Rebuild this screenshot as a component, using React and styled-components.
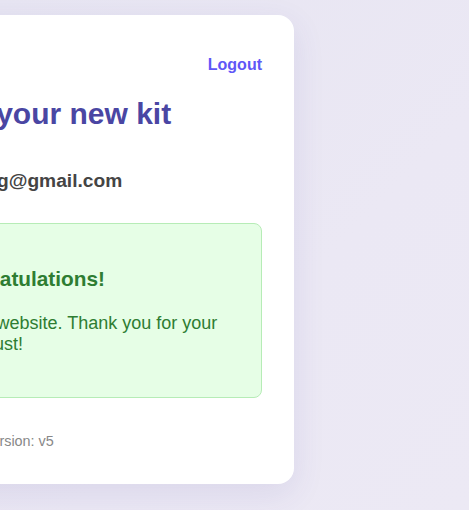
import styled, { createGlobalStyle } from "styled-components";

const GlobalStyles = createGlobalStyle`
  * {
    box-sizing: border-box;
  }
  body {
    margin: 0;
    font-family: "Liberation Sans", Arial, Helvetica, sans-serif;
    background: linear-gradient(135deg, #e7e5f2 0%, #ebe8f4 60%, #ece9f4 100%);
    overflow: hidden;
  }
`;

function App() {
  return (
    <>
      <GlobalStyles />
      <Page>
        <Card>
          <Header>
            <Brand>Starter Kit</Brand>
            <LogoutButton type="button">Logout</LogoutButton>
          </Header>
          <Title>Welcome to your new kit</Title>
          <Email>Email: nguyenhoang@gmail.com</Email>
          <SuccessBox>
            <SuccessTitle>All done. Congratulations!</SuccessTitle>
            <SuccessText>
              You’re now on this website. Thank you for your kind support and
              trust!
            </SuccessText>
          </SuccessBox>
          <Footer>© 2024 Starter Kit Labs · Version: v5</Footer>
        </Card>
      </Page>
    </>
  );
}

const Page = styled.main`
  min-height: 510px;
  width: 469px;
  display: flex;
  justify-content: flex-end;
  align-items: flex-start;
  padding: 15px 175px 0 0;
`;

const Card = styled.section`
  flex-shrink: 0;
  width: 506px;
  display: flex;
  flex-direction: column;
  padding: 32px 32px 35px;
  background: #fff;
  border-radius: 16px;
  box-shadow: 0 10px 32px rgba(70, 60, 160, 0.1);
`;

const Header = styled.header`
  height: 36px;
  display: flex;
  justify-content: space-between;
  align-items: center;
`;

const Brand = styled.span`
  font-size: 16px;
  font-weight: 700;
  color: #4a46a3;
`;

const LogoutButton = styled.button`
  border: none;
  background: none;
  padding: 0;
  font-family: inherit;
  font-size: 16px;
  font-weight: 700;
  color: #5f57f7;
  cursor: pointer;
`;

const Title = styled.h1`
  margin: 14px 0 0;
  font-size: 30px;
  font-weight: 700;
  color: #4a46a3;
`;

const Email = styled.p`
  margin: 39px 0 0;
  font-size: 19.2px;
  font-weight: 700;
  color: #444;
`;

const SuccessBox = styled.div`
  margin-top: 31px;
  padding: 24px;
  background: #e6fee6;
  border: 1px solid #b6ecb6;
  border-radius: 8px;
`;

const SuccessTitle = styled.h3`
  margin: 19px 0 22px;
  font-size: 20.8px;
  font-weight: 700;
  color: #2e7d32;
`;

const SuccessText = styled.p`
  margin: 0 0 18px;
  font-size: 18px;
  color: #2e7d32;
`;

const Footer = styled.footer`
  margin-top: 35px;
  font-size: 14.4px;
  color: #888;
`;

export default App;
